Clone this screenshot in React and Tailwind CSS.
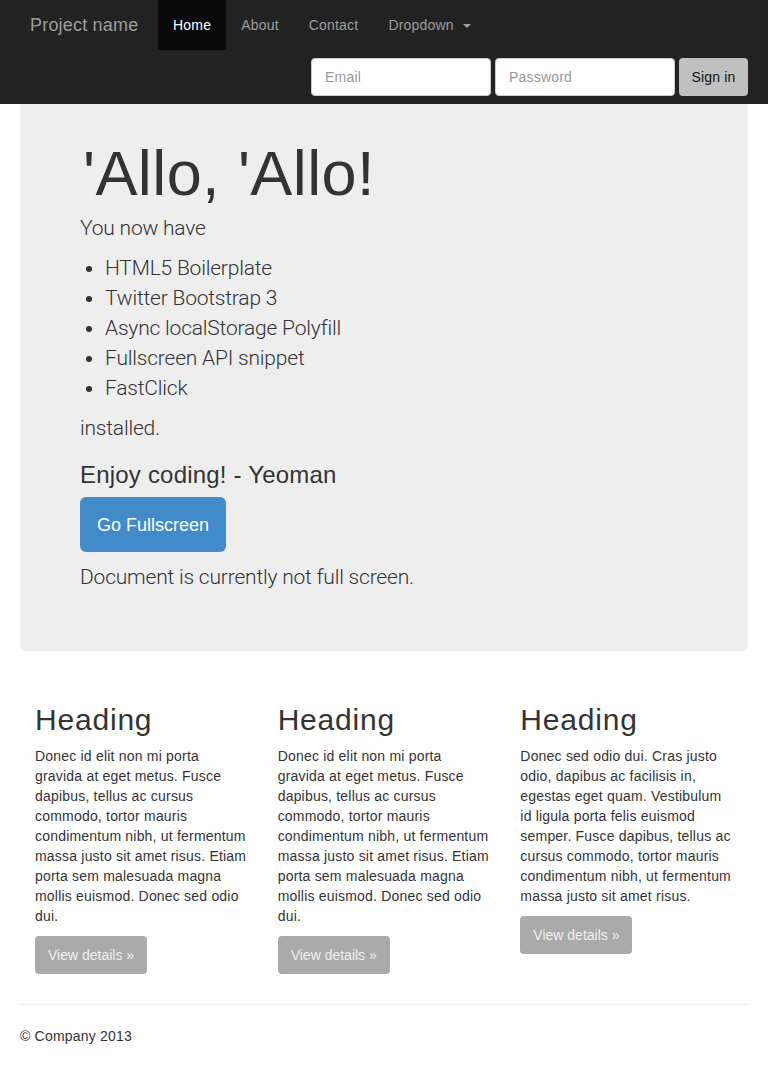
export default function App() {
  const items = [
    "HTML5 Boilerplate",
    "Twitter Bootstrap 3",
    "Async localStorage Polyfill",
    "Fullscreen API snippet",
    "FastClick",
  ];

  const columns = [
    "Donec id elit non mi porta gravida at eget metus. Fusce dapibus, tellus ac cursus commodo, tortor mauris condimentum nibh, ut fermentum massa justo sit amet risus. Etiam porta sem malesuada magna mollis euismod. Donec sed odio dui.",
    "Donec id elit non mi porta gravida at eget metus. Fusce dapibus, tellus ac cursus commodo, tortor mauris condimentum nibh, ut fermentum massa justo sit amet risus. Etiam porta sem malesuada magna mollis euismod. Donec sed odio dui.",
    "Donec sed odio dui. Cras justo odio, dapibus ac facilisis in, egestas eget quam. Vestibulum id ligula porta felis euismod semper. Fusce dapibus, tellus ac cursus commodo, tortor mauris condimentum nibh, ut fermentum massa justo sit amet risus.",
  ];

  return (
    <div className="min-h-[1076px] bg-white text-[#333] text-[14px] leading-[20px] tracking-[0.2px] font-['Liberation_Sans',Arial,sans-serif]">
      {/* NAVBAR */}
      <div className="bg-[#222] h-[104px]">
        <div className="flex h-[50px] items-stretch">
          <a className="w-[158px] pl-[30px] flex items-center text-[18px] text-[#9d9d9d]">
            Project name
          </a>
          <a className="px-[15px] flex items-center bg-[#080808] text-white">Home</a>
          <a className="px-[15px] flex items-center text-[#9d9d9d]">About</a>
          <a className="px-[15px] flex items-center text-[#9d9d9d]">Contact</a>
          <a className="px-[15px] flex items-center text-[#9d9d9d]">
            Dropdown
            <span className="ml-[9px] mt-[2px] w-0 h-0 border-t-[4px] border-t-[#9d9d9d] border-x-[4px] border-x-transparent" />
          </a>
        </div>

        <div className="flex justify-end gap-[4px] pr-[20px] pt-[8px]">
          <input
            placeholder="Email"
            className="w-[180px] h-[38px] bg-white rounded-[4px] border border-[#ccc] px-[13px] text-[14px] placeholder-[#999] outline-none"
          />
          <input
            placeholder="Password"
            className="w-[180px] h-[38px] bg-white rounded-[4px] border border-[#ccc] px-[13px] text-[14px] placeholder-[#999] outline-none"
          />
          <button className="w-[69px] h-[38px] bg-[#c0c0c0] rounded-[4px] text-[14px] text-[#111]">
            Sign in
          </button>
        </div>
      </div>

      {/* JUMBOTRON */}
      <div className="mx-[20px] bg-[#eee] rounded-b-[6px] pl-[60px] pt-[35px] pb-[59px]">
        <h1 className="ml-[3px] text-[63px] leading-[69px] tracking-[0.4px] text-[#333] mb-[5px]">'Allo, 'Allo!</h1>
        <div className="font-['Roboto',sans-serif] font-light tracking-[-0.2px] text-[21px] leading-[30px]">
          <p className="mb-[10px]">You now have</p>
          <ul className="list-disc pl-[25px] mb-[10px]">
            {items.map((i) => (
              <li key={i}>{i}</li>
            ))}
          </ul>
          <p>installed.</p>
        </div>
        <h3 className="mt-[19px] text-[24px] leading-[26px]">Enjoy coding! - Yeoman</h3>
        <button className="mt-[9px] h-[55px] px-[17px] bg-[#428bca] rounded-[6px] text-white text-[18px] tracking-normal">
          Go Fullscreen
        </button>
        <p className="mt-[10px] font-['Roboto',sans-serif] font-light tracking-[-0.2px] text-[21px] leading-[30px]">
          Document is currently not full screen.
        </p>
      </div>

      {/* COLUMNS */}
      <div className="mx-[20px] grid grid-cols-3 pt-[52px]">
        {columns.map((text, idx) => (
          <div key={idx} className="px-[15px]">
            <h2 className="text-[30px] leading-[33px] tracking-[0.8px] mb-[10px]">Heading</h2>
            <p className="mb-[10px]">{text}</p>
            <button className="h-[38px] px-[13px] bg-[#aaa] rounded-[4px] text-[#f0f0f0] text-[14px] tracking-normal">
              View details »
            </button>
          </div>
        ))}
      </div>

      {/* FOOTER */}
      <div className="mx-[20px] mt-[30px] border-t border-[#eee] pt-[21px]">
        <p>© Company 2013</p>
      </div>
    </div>
  );
}
